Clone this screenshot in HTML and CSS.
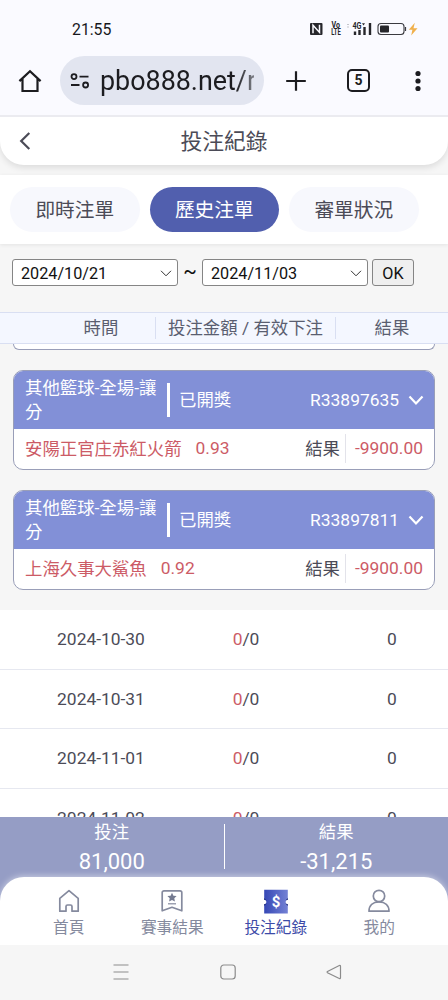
FILE: index.html
```html
<!DOCTYPE html>
<html lang="zh-Hant">
<head>
    <meta charset="UTF-8">
    <meta name="viewport" content="width=device-width, initial-scale=1.0">
    <title>投注紀錄</title>
    <link rel="stylesheet" href="styles.css">
</head>
<body>

    <!-- Status Bar -->
    <div class="status-bar">
        <span class="clock">21:55</span>
        <svg class="status-icons" width="110" height="16" viewBox="0 0 110 16">
            <rect x="1" y="2" width="12.5" height="12" rx="1" fill="#26262b"/>
            <path d="M4 12.2V4.300L10.500 11.400V3.800" fill="none" stroke="#fafaff" stroke-width="1.5"/>
            <text x="22.5" y="7.4" textLength="8.5" lengthAdjust="spacingAndGlyphs" class="tiny">Vo</text>
            <text x="22.3" y="14.2" textLength="9.5" lengthAdjust="spacingAndGlyphs" class="tiny">LTE</text>
            <path d="M38 3.500h2M38 6h2" stroke="#c5c5ca" stroke-width="1"/>
            <text x="43.5" y="7.5" textLength="9" lengthAdjust="spacingAndGlyphs" class="tiny">4G</text>
            <path d="M53 2.200h3l-1.500 2.400z" fill="#26262b"/>
            <path d="M46 10.500V14M50.500 9V14M55.500 6V14M61 2V14" stroke="#26262b" stroke-width="2.4"/>
            <rect x="69" y="2.5" width="26" height="11" rx="3" fill="none" stroke="#3a3a40" stroke-width="1.1"/>
            <rect x="71" y="4.5" width="9" height="7" rx="1" fill="#26262b"/>
            <path d="M96.500 6v4" stroke="#3a3a40" stroke-width="1.2"/>
            <path d="M105.800 1.800L99.800 8.800h3.600L102.200 14.500l6.300-7.300h-4z" fill="#f0b04c"/>
        </svg>
    </div>

    <!-- Browser Toolbar -->
    <div class="toolbar">
        <svg class="home" width="24" height="24" viewBox="0 0 24 24">
            <path d="M1.400 12.100L12 2.300l10.600 9.800M4.500 10v12h15v-12" fill="none" stroke="#1c1c20" stroke-width="2.2"/>
        </svg>
        <div class="address">
            <svg width="20" height="16" viewBox="0 0 20 16">
                <g fill="none" stroke="#1c1c20" stroke-width="1.8">
                    <circle cx="4" cy="3.6" r="2.5"/>
                    <path d="M9.500 3.600h9M1 12h8.500"/>
                    <circle cx="15.6" cy="12" r="2.5"/>
                </g>
            </svg>
            <span class="url">pbo888.net/r</span>
        </div>
        <svg class="plus" width="22" height="22" viewBox="0 0 22 22">
            <path d="M11 1.200v19.600M1.200 11h19.600" stroke="#1c1c20" stroke-width="2.2"/>
        </svg>
        <span class="tab-count">5</span>
        <svg class="dots" width="6" height="22" viewBox="0 0 6 22" fill="#1c1c20">
            <circle cx="3" cy="3.5" r="2.6"/>
            <circle cx="3" cy="11" r="2.6"/>
            <circle cx="3" cy="18.5" r="2.6"/>
        </svg>
    </div>

    <!-- Page Header -->
    <header>
        <svg class="back" width="12" height="18" viewBox="0 0 12 18">
            <path d="M10.300 1L2.200 9l8.100 8" fill="none" stroke="#4b4b57" stroke-width="2.2"/>
        </svg>
        <h1>投注紀錄</h1>
    </header>

    <!-- Tabs -->
    <nav class="tabs">
        <a class="tab">即時注單</a>
        <a class="tab active">歷史注單</a>
        <a class="tab">審單狀況</a>
    </nav>

    <!-- Date Filter -->
    <div class="filter">
        <div class="date-select">2024/10/21
            <svg width="12" height="7" viewBox="0 0 12 7"><path d="M1 .8l5 5 5-5" fill="none" stroke="#333" stroke-width="1"/></svg>
        </div>
        <span class="tilde">~</span>
        <div class="date-select">2024/11/03
            <svg width="12" height="7" viewBox="0 0 12 7"><path d="M1 .8l5 5 5-5" fill="none" stroke="#333" stroke-width="1"/></svg>
        </div>
        <button class="ok-button">OK</button>
    </div>

    <!-- Table Head -->
    <div class="table-head">
        <span>時間</span>
        <span>投注金額 / 有效下注</span>
        <span>結果</span>
    </div>

    <!-- Bet List -->
    <main class="list">
        <div class="bets">
            <div class="bet-end"></div>

            <div class="bet">
                <div class="bet-top">
                    <span class="bet-type">其他籃球-全場-讓分</span>
                    <span class="bet-state">已開獎</span>
                    <span class="bet-id">R33897635</span>
                    <svg width="16" height="11" viewBox="0 0 16 11"><path d="M1.500 1.500L8 8.500l6.500-7" fill="none" stroke="#fff" stroke-width="2.2"/></svg>
                </div>
                <div class="bet-bottom">
                    <span class="team">安陽正官庄赤紅火箭</span>
                    <span class="odds">0.93</span>
                    <span class="label">結果</span>
                    <span class="amount">-9900.00</span>
                </div>
            </div>

            <div class="bet">
                <div class="bet-top">
                    <span class="bet-type">其他籃球-全場-讓分</span>
                    <span class="bet-state">已開獎</span>
                    <span class="bet-id">R33897811</span>
                    <svg width="16" height="11" viewBox="0 0 16 11"><path d="M1.500 1.500L8 8.500l6.500-7" fill="none" stroke="#fff" stroke-width="2.2"/></svg>
                </div>
                <div class="bet-bottom">
                    <span class="team">上海久事大鯊魚</span>
                    <span class="odds">0.92</span>
                    <span class="label">結果</span>
                    <span class="amount">-9900.00</span>
                </div>
            </div>
        </div>

        <div class="day"><span>2024-10-30</span><span><b>0</b>/0</span><span>0</span></div>
        <div class="day"><span>2024-10-31</span><span><b>0</b>/0</span><span>0</span></div>
        <div class="day"><span>2024-11-01</span><span><b>0</b>/0</span><span>0</span></div>
        <div class="day"><span>2024-11-02</span><span><b>0</b>/0</span><span>0</span></div>
    </main>

    <!-- Totals -->
    <div class="totals">
        <div class="total"><span>投注</span><strong>81,000</strong></div>
        <div class="total"><span>結果</span><strong>-31,215</strong></div>
    </div>

    <!-- Bottom Menu -->
    <footer>
        <a class="menu-item">
            <svg width="26" height="26" viewBox="0 0 26 26" fill="none" stroke="#858a9e" stroke-width="1.7" stroke-linejoin="round">
                <path d="M3.800 10.300L13 2.600l9.200 7.700v12.900h-6.200v-4.700a1.500 1.500 0 0 0-1.500-1.500h-3a1.500 1.500 0 0 0-1.500 1.500v4.700H3.800z"/>
            </svg>
            首頁
        </a>
        <a class="menu-item">
            <svg width="26" height="26" viewBox="0 0 26 26">
                <path d="M5 2.800h16a1.800 1.800 0 0 1 1.800 1.800v18.200L13 19.300 3.200 22.800V4.600A1.800 1.800 0 0 1 5 2.800z" fill="none" stroke="#858a9e" stroke-width="1.7" stroke-linejoin="round"/>
                <path d="M13 4.800l1.400 2.900 3.200.4-2.300 2.200.6 3.200-2.900-1.600-2.900 1.600.6-3.200-2.300-2.200 3.200-.4z" fill="#747a90"/>
                <path d="M9 15.800h8" stroke="#858a9e" stroke-width="1.2"/>
            </svg>
            賽事結果
        </a>
        <a class="menu-item current">
            <svg width="26" height="26" viewBox="0 0 26 26">
                <defs>
                    <linearGradient id="ticket">
                        <stop offset="0" stop-color="#3547b5"/>
                        <stop offset="1" stop-color="#7482d5"/>
                    </linearGradient>
                </defs>
                <path d="M1.200 1.800h23.600v10a2.200 2.200 0 0 0 0 4.400v9.300H1.200v-9.300a2.200 2.200 0 0 0 0-4.400z" fill="url(#ticket)"/>
                <path d="M1.200 11.800v-1.700l2.300 2.500zM1.200 16.200v1.700l2.300-2.500zM24.800 11.800v-1.700l-2.300 2.500zM24.800 16.200v1.700l-2.300-2.500z" fill="#202c75"/>
                <text x="13" y="18.7" text-anchor="middle" class="dollar">$</text>
            </svg>
            投注紀錄
        </a>
        <a class="menu-item">
            <svg width="26" height="26" viewBox="0 0 26 26" fill="none" stroke="#858a9e" stroke-width="1.7">
                <circle cx="13" cy="8" r="5.7"/>
                <path d="M3 23.200c0-5.800 4-9.400 10-9.400s10 3.600 10 9.400z" stroke-linejoin="round"/>
            </svg>
            我的
        </a>
    </footer>

    <!-- System Navigation -->
    <div class="system-nav">
        <svg width="16" height="16" viewBox="0 0 16 16"><path d="M.5 1h15M.5 8h15M.5 15h15" stroke="#8b8b8b" stroke-width="1.1"/></svg>
        <svg width="16" height="16" viewBox="0 0 16 16"><rect x=".8" y="1" width="14.4" height="14" rx="3" fill="none" stroke="#8b8b8b" stroke-width="1.2"/></svg>
        <svg width="16" height="16" viewBox="0 0 16 16"><path d="M13.300 1.500Q14.500 1 14.500 2.500v11q0 1.500-1.200 1L1.500 8.800Q.6 8 1.500 7.400z" fill="none" stroke="#8b8b8b" stroke-width="1.2"/></svg>
    </div>

</body>
</html>
```

FILE: styles.css
```css
* {
    box-sizing: border-box;
}

body {
    display: flex;
    flex-direction: column;
    height: 1000px;
    margin: 0;
    overflow: hidden;
    background-color: #f6f6f6;
    color: #4b4b57;
    font-family: Roboto, "Noto Sans CJK TC", sans-serif;
    font-size: 17.4px;
    font-weight: 400;
}

svg {
    display: block;
    flex: none;
}

/* Status Bar */
.status-bar {
    display: flex;
    flex: none;
    justify-content: space-between;
    align-items: center;
    height: 46px;
    padding: 12px 29px 0 72px;
    background-color: #fafaff;
}

.clock {
    padding-top: 1px;
    color: #17171b;
    font-size: 15.8px;
}

.tiny {
    fill: #26262b;
    font-size: 8.2px;
    font-weight: 700;
}

/* Browser Toolbar */
.toolbar {
    display: flex;
    flex: none;
    align-items: center;
    height: 71px;
    padding: 1px 27px 1px 18px;
    background-color: #fafaff;
    border-bottom: 2px solid #ebebf0;
}

.address {
    display: flex;
    align-items: center;
    width: 204px;
    height: 49px;
    margin: 0 21px 0 18px;
    padding-left: 10px;
    border-radius: 25px;
    background-color: #e2e5f0;
}

.url {
    width: 154px;
    margin-left: 10px;
    padding-top: 1px;
    overflow: hidden;
    color: #1c1c20;
    font-size: 26.9px;
    line-height: 40px;
    white-space: nowrap;
    -webkit-mask-image: linear-gradient(to right, #000 88%, rgba(0, 0, 0, 0.5));
    mask-image: linear-gradient(to right, #000 88%, rgba(0, 0, 0, 0.5));
}

.tab-count {
    width: 23px;
    height: 23px;
    margin-left: 40px;
    border: 2px solid #1c1c20;
    border-radius: 5px;
    color: #1c1c20;
    font-size: 14px;
    font-weight: 700;
    line-height: 19px;
    text-align: center;
}

.dots {
    margin-left: auto;
}

/* Page Header */
header {
    display: flex;
    flex: none;
    align-items: center;
    height: 48px;
    padding: 0 19px;
    border-radius: 0 0 24px 24px;
    background-color: white;
    box-shadow: 0 3px 6px rgba(0, 0, 0, 0.1);
    clip-path: inset(0 0 -10px 0);
}

h1 {
    flex: 1;
    margin: 2px 12px 0 0;
    font-size: 21.8px;
    font-weight: 400;
    line-height: 32px;
    text-align: center;
}

/* Tabs */
.tabs {
    display: flex;
    flex: none;
    gap: 10px;
    height: 69px;
    margin-top: 10px;
    padding: 12px 10px;
    background-color: white;
    box-shadow: 0 1px 4px rgba(0, 0, 0, 0.08);
}

.tab {
    width: 129.5px;
    height: 45px;
    border-radius: 23px;
    background-color: #f7f8fd;
    font-size: 19.7px;
    line-height: 48px;
    text-align: center;
}

.tab.active {
    background-color: #515fae;
    color: white;
}

/* Date Filter */
.filter {
    display: flex;
    flex: none;
    align-items: flex-start;
    height: 68px;
    padding: 15px 12px 0;
    color: #111;
    font-size: 16.2px;
}

.date-select {
    display: flex;
    justify-content: space-between;
    align-items: center;
    width: 166px;
    height: 27px;
    padding: 1px 5px 0 8px;
    border: 1px solid #858585;
    border-radius: 3px;
    background-color: white;
}

.tilde {
    width: 24px;
    font-size: 20px;
    line-height: 25px;
    text-align: center;
}

.ok-button {
    width: 42px;
    height: 27px;
    margin-left: 4px;
    padding: 1px 0 0;
    border: 1px solid #858585;
    border-radius: 3px;
    background-color: #efefef;
    color: #111;
    font-family: inherit;
    font-size: 16.2px;
}

/* Table Head */
.table-head {
    display: grid;
    flex: none;
    grid-template-columns: 155px 180px 113px;
    align-items: center;
    height: 32px;
    border-top: 1px solid #d9dff2;
    border-bottom: 1px solid #d9dff2;
    background-color: #f4f7ff;
    color: #5a5e70;
    line-height: 22px;
    text-align: center;
}

.table-head span + span {
    border-left: 1px solid #d9dff2;
}

.table-head span:first-child {
    padding-left: 47px;
}

/* Bet List */
.list {
    flex: none;
    height: 473px;
    overflow: hidden;
}

.bets {
    height: 266px;
    padding: 0 13px;
}

.bet-end {
    height: 6px;
    border: 1px solid #999eb8;
    border-top: 0;
    border-radius: 0 0 10px 10px;
    background-color: white;
}

.bet {
    height: 100px;
    margin-top: 20px;
    overflow: hidden;
    border: 1px solid #999eb8;
    border-radius: 10px;
    background-color: white;
}

.bet-top {
    display: flex;
    align-items: center;
    height: 58px;
    padding: 0 10px 0 11px;
    background-color: #8290d7;
    color: white;
}

.bet-type {
    width: 142px;
    line-height: 24px;
}

.bet-state {
    padding-left: 9px;
    border-left: 3px solid white;
    line-height: 34px;
}

.bet-id {
    margin: 0 9px 0 auto;
}

.bet-bottom {
    display: flex;
    align-items: center;
    height: 39px;
    padding: 0 11px;
    line-height: 29px;
}

.team, .odds, .amount {
    color: #cc5b66;
}

.team, .label {
    padding-top: 1px;
}

.odds {
    margin-left: 14px;
}

.label {
    margin-left: auto;
    padding-right: 5px;
}

.amount {
    padding-left: 9px;
    border-left: 1px solid #e3e3ea;
}

.day {
    display: grid;
    grid-template-columns: 156px 180px 112px;
    height: 59.7px;
    border-bottom: 1px solid #e6e8f0;
    background-color: white;
    line-height: 59px;
    text-align: center;
}

.day span:first-child {
    padding-left: 46px;
}

.day b {
    color: #cc5b66;
    font-weight: 400;
}

/* Totals */
.totals {
    display: flex;
    flex: none;
    height: 84px;
    margin-bottom: -24px;
    background-color: #959dc5;
    color: white;
}

.total {
    display: flex;
    flex: 1;
    flex-direction: column;
    height: 45px;
    margin-top: 7px;
    text-align: center;
}

.total:first-child {
    border-right: 1px solid white;
}

.total span {
    margin-top: -5px;
    line-height: 26px;
}

.total strong {
    font-size: 22px;
    font-weight: 400;
    line-height: 33px;
}

/* Bottom Menu */
footer {
    position: relative;
    display: flex;
    flex: none;
    height: 68px;
    padding: 11px 17px 0;
    border-radius: 24px 24px 0 0;
    background-color: white;
    box-shadow: 0 -1px 6px rgba(255, 255, 255, 0.5);
}

.menu-item {
    display: flex;
    flex: 1;
    flex-direction: column;
    align-items: center;
    color: #858a9e;
    font-size: 15.7px;
    line-height: 27px;
}

.menu-item.current {
    color: #3d4ba8;
}

.dollar {
    fill: white;
    font-size: 15px;
    font-weight: 700;
}

/* System Navigation */
.system-nav {
    position: relative;
    display: flex;
    flex: 1;
    justify-content: space-between;
    padding: 19px 106px 0 113px;
    background-color: #f6f6f6;
}
```
